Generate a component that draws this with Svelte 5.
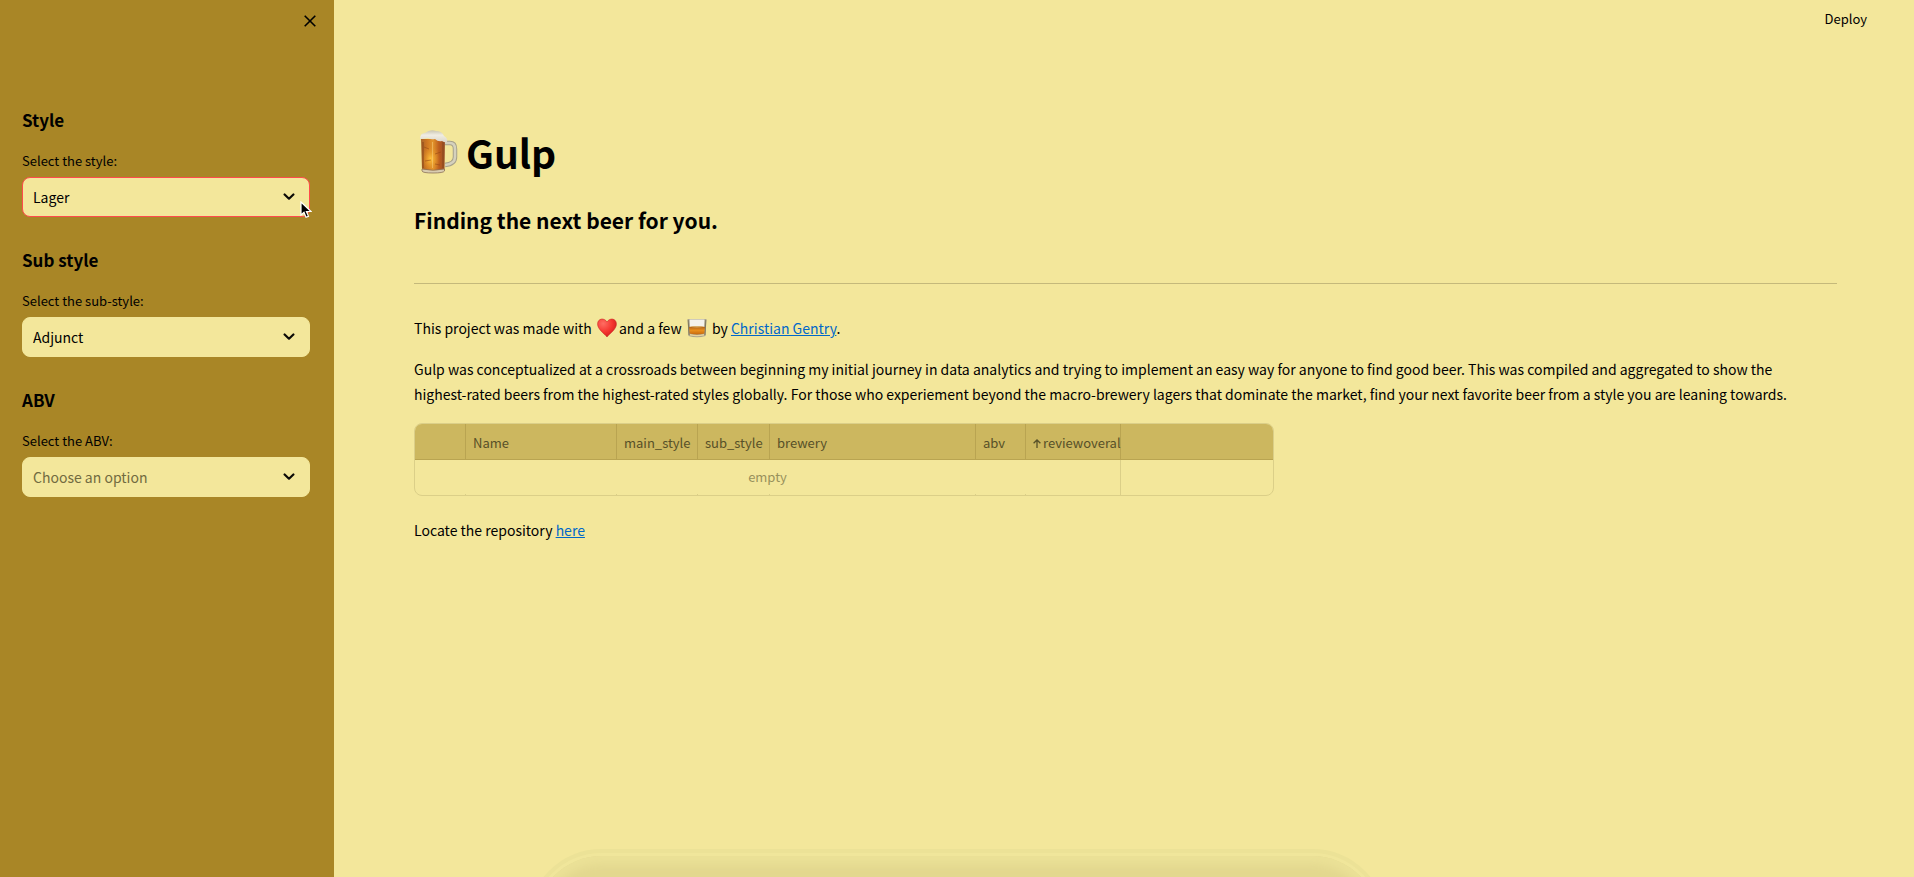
<script>
  const filters = [
    { id: 'style', title: 'Style', label: 'Select the style:', value: 'Lager', active: true },
    { id: 'sub', title: 'Sub style', label: 'Select the sub-style:', value: 'Adjunct' },
    { id: 'abv', title: 'ABV', label: 'Select the ABV:', value: 'Choose an option', placeholder: true }
  ];
  const columns = [
    { name: '', width: 51 },
    { name: 'Name', width: 151 },
    { name: 'main_style', width: 81 },
    { name: 'sub_style', width: 72 },
    { name: 'brewery', width: 206 },
    { name: 'abv', width: 50 },
    { name: 'reviewoveral', width: 95, sorted: true },
    { name: '', width: 152 }
  ];
</script>

<div class="app">
  <aside>
    <div class="top">
      <button class="close" aria-label="Close sidebar">
        <svg width="12" height="12" viewBox="0 0 12 12"><path d="M.7.7l10.600 10.600M11.300.7L.7 11.300" stroke="#000" stroke-width="1.600" fill="none" /></svg>
      </button>
    </div>
    {#each filters as f}
      <section>
        <h3>{f.title}</h3>
        <label for={f.id}>{f.label}</label>
        <div class="field">
          <select id={f.id} class:active={f.active} class:placeholder={f.placeholder}>
            <option>{f.value}</option>
          </select>
          <svg class="chevron" width="12" height="8" viewBox="0 0 12 8"><path d="M1.600 1.500L6 5.700l4.400-4.200" stroke="#0b0a05" stroke-width="2.200" stroke-linecap="round" stroke-linejoin="round" fill="none" /></svg>
          {#if f.active}
            <svg class="pointer" width="12" height="18" viewBox="0 0 12 18"><path d="M1 1v13l3-2.700 2 5 2.500-1-2.100-4.800H11z" fill="#000" stroke="#fff" stroke-width="1.200" /></svg>
          {/if}
        </div>
      </section>
    {/each}
  </aside>

  <main>
    <header><button class="deploy">Deploy</button></header>
    <div class="content">
      <h1>
        <svg class="mug" width="38" height="44" viewBox="0 0 38 44" aria-hidden="true">
          <defs>
            <linearGradient id="beer"><stop offset="0" stop-color="#a8642a" /><stop offset=".25" stop-color="#cf7620" /><stop offset=".5" stop-color="#e2942b" /><stop offset=".75" stop-color="#bd5d1d" /><stop offset="1" stop-color="#98502a" /></linearGradient>
            <radialGradient id="glow" cx=".4" cy=".6" r=".4"><stop offset="0" stop-color="#ffc23c" /><stop offset="1" stop-color="#e08a20" stop-opacity="0" /></radialGradient>
            <linearGradient id="foam" x2="0" y2="1"><stop offset="0" stop-color="#cbc6b2" /><stop offset=".4" stop-color="#f0ede3" /><stop offset="1" stop-color="#dcd6c8" /></linearGradient>
          </defs>
          <path d="M25 13h5q5 0 5 6v8q0 7-10 8" fill="none" stroke="#a6a18a" stroke-width="4.500" />
          <path d="M25 13h5q5 0 5 6v8q0 7-10 8" fill="none" stroke="#d5d1bd" stroke-width="2.500" />
          <path d="M1 9h24l-.5 31q0 2-11.500 2T2 40z" fill="url(#beer)" />
          <path d="M1 9h24l-.5 31q0 2-11.500 2T2 40z" fill="url(#glow)" />
          <path d="M3 12v26M23 12v26" stroke="#8d4a1d" stroke-width="1.500" opacity=".7" />
          <path d="M12.500 12v26" stroke="#ffe09a" stroke-width="1" opacity=".4" />
          <path d="M4 17l5 2M15 24l6-2M5 31l6-1M15 34l5 1" stroke="#9a4b14" stroke-width="1" opacity=".6" />
          <path d="M2 39q11 2.500 22.500 0v2q-1 2-11.500 2T2 41z" fill="#d9ccb0" stroke="#8d7458" stroke-width=".8" />
          <path d="M0 9Q0 3 5 3q5-4 11-2 6 0 8 5 4 2 3 6-2 1-5-1-4 1-7-2-4 1-7-1-4 1-8 1z" fill="url(#foam)" />
        </svg>
        <span>Gulp</span>
      </h1>
      <h2>Finding the next beer for you.</h2>
      <hr />
      <p>
        This project was made with
        <svg class="emoji" width="20" height="20" viewBox="0 0 20 20" role="img" aria-label="love">
          <defs><radialGradient id="red" cx=".3" cy=".25" r=".8"><stop offset="0" stop-color="#ff6d62" /><stop offset=".6" stop-color="#f5352f" /><stop offset="1" stop-color="#d01e20" /></radialGradient></defs>
          <path d="M10 19C7 15 .6 11.500.6 5.900.6.300 7.400-.6 10 4c2.600-4.600 9.400-3.700 9.400 1.900C19.400 11.500 13 15 10 19z" fill="url(#red)" stroke="#c92824" stroke-width=".6" />
        </svg>and a few
        <svg class="emoji" width="20" height="20" viewBox="0 0 20 20" role="img" aria-label="whisky">
          <defs><linearGradient id="whisky" x2="0" y2="1"><stop offset="0" stop-color="#a95b17" /><stop offset=".5" stop-color="#e98f1c" /><stop offset="1" stop-color="#c6690f" /></linearGradient></defs>
          <path d="M.5 1h19l-1 17q-8.500 2.500-17 0z" fill="#aaa58e" />
          <path d="M2.500 1.500h15L17 9H3z" fill="#f4f2ec" />
          <path d="M2 9q8-1.500 16 0l-.5 6.500q-7.500 2-15 0z" fill="url(#whisky)" />
          <path d="M2.500 8.700q7.500-1.400 15 0-7.500 1.500-15 0z" fill="#d8ae69" />
          <path d="M3 16q7 1.800 14 0v1.500q-7 1.500-14 0z" fill="#e8d39d" />
          <path d="M1.200 2l.8 15M18.800 2l-.8 15" stroke="#756b52" stroke-width=".8" />
        </svg>
        by <a href="#author">Christian Gentry</a>.
      </p>
      <p>
        Gulp was conceptualized at a crossroads between beginning my initial journey in data analytics and trying to implement an easy way for anyone to find good beer. This was compiled and aggregated to show the <span class="keep">highest-rated</span> beers from the highest-rated styles globally. For those who experiement beyond the macro-brewery lagers that dominate the market, find your next favorite beer from a style you are leaning towards.
      </p>
      <div class="grid">
        <table>
          <colgroup>
            {#each columns as c}<col style="width: {c.width}px" />{/each}
          </colgroup>
          <thead>
            <tr>
              {#each columns as c}
                <th>{#if c.sorted}<svg class="arrow" width="8" height="9" viewBox="0 0 8 9"><path d="M4 9V1M.6 4.300L4 1l3.400 3.300" stroke="#575028" stroke-width="1.300" fill="none" /></svg>{/if}{c.name}</th>
              {/each}
            </tr>
          </thead>
          <tbody>
            <tr class="empty"><td colspan="7">empty</td><td></td></tr>
            <tr class="ticks">{#each columns as c}<td></td>{/each}</tr>
          </tbody>
        </table>
      </div>
      <p>Locate the repository <a href="#repo">here</a></p>
    </div>
  </main>
  <div class="dock"><div class="halo"><div class="shade"></div></div></div>
</div>

<style>
  :global(body) { background: #f3e79b; }
  .app {
    display: flex;
    min-height: 100vh;
    font-family: "Noto Sans CJK SC", "Noto Sans", sans-serif;
    font-size: 14px;
    line-height: 25px;
    color: #000;
  }
  button, select { font: inherit; color: inherit; }
  button { border: 0; background: none; padding: 0; }
  aside {
    box-sizing: border-box;
    flex: 0 0 334px;
    padding: 0 24px 0 22px;
    background: #a98626;
  }
  .top { display: flex; justify-content: flex-end; height: 105px; padding-top: 9px; box-sizing: border-box; }
  .close { display: flex; align-items: center; justify-content: center; width: 24px; height: 24px; margin-right: -12px; }
  section { display: flex; flex-direction: column; height: 140px; }
  h3 { margin: 0; font-size: 17px; line-height: 30px; font-weight: 700; }
  label { margin-top: 16px; font-size: 13px; line-height: 20px; }
  .field { position: relative; margin-top: 6px; }
  select {
    appearance: none;
    display: block;
    box-sizing: border-box;
    width: 100%;
    height: 40px;
    padding: 0 40px 0 10px;
    border: 1px solid #f3e79b;
    border-radius: 8px;
    background: #f3e79b;
  }
  select.active { border-color: #ff4b4b; }
  select.placeholder { color: #716b40; }
  .chevron { position: absolute; right: 15px; top: 16px; pointer-events: none; }
  .pointer { position: absolute; right: -2px; top: 24px; }
  main { flex: 1; min-width: 0; }
  header { display: flex; justify-content: flex-end; height: 40px; padding-right: 47px; }
  .deploy { height: 36px; font-size: 13px; }
  .content { padding: 82px 77px 0 80px; }
  h1 { display: flex; align-items: center; gap: 8px; margin: 0; padding-left: 6px; font-size: 39px; line-height: 60px; font-weight: 700; }
  h2 { margin: 20px 0 0; font-size: 21px; line-height: 36px; font-weight: 700; }
  hr { margin: 45px 0 32px; border: 0; border-top: 1px solid #c4b97b; }
  p { margin: 0 0 16px; }
  a { color: #0068c9; text-decoration: underline; }
  .keep { white-space: nowrap; }
  .emoji { margin: 0 2px; vertical-align: -4px; }
  .grid {
    width: fit-content;
    max-width: 100%;
    margin-bottom: 22px;
    overflow: hidden;
    border: 1px solid #dbcf88;
    border-radius: 8px;
  }
  table { width: 858px; table-layout: fixed; border-collapse: separate; border-spacing: 0; font-size: 13px; line-height: 20px; }
  th {
    height: 36px;
    box-sizing: border-box;
    padding: 2px 0 0 7px;
    border-right: 1px solid #b9a451;
    border-bottom: 1px solid #b9a451;
    background: #ccb75f;
    color: #575028;
    font-weight: 400;
    text-align: left;
    white-space: nowrap;
  }
  .arrow { margin-right: 2px; }
  td { padding: 0; border-right: 1px solid #dbcf88; }
  th:last-child, td:last-child { border-right: 0; }
  .empty td { height: 34px; color: #98915c; text-align: center; }
  .ticks td { height: 1px; }
  .dock {
    position: fixed;
    bottom: 0;
    left: 50%;
    width: 860px;
    height: 28px;
    overflow: hidden;
    transform: translateX(-50%);
    pointer-events: none;
  }
  .halo {
    box-sizing: border-box;
    height: 150px;
    padding: 3px;
    border: 4px solid #ece297;
    border-radius: 75px;
    background: #f0e69b;
  }
  .shade {
    height: 136px;
    border-radius: 68px;
    background: #e3d88f;
    box-shadow: inset 0 0 8px 8px #ebe197;
  }
</style>
